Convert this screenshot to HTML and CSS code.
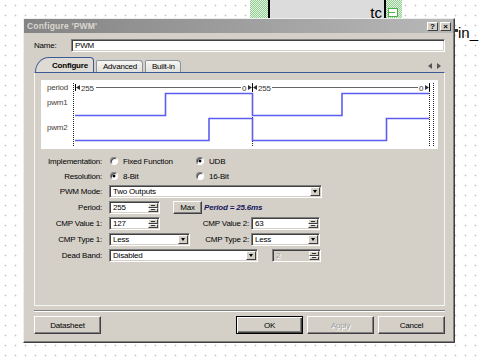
FILE: index.html
```html
<!DOCTYPE html>
<html lang="en">
	<head>
		<meta charset="UTF-8">
		<title>Configure 'PWM'</title>
		<link rel="stylesheet" href="styles.css">
	</head>
	<body>
		<!-- schematic canvas behind the dialog -->
		<div class="comp">
			<div class="hatch"></div>
			<div class="comp-body"><span class="comp-label">tc</span></div>
			<div class="hatch hatch-right"><span class="pin"></span></div>
		</div>
		<div class="net-label"><span class="net-tick"></span>in_</div>

		<div class="dialog">
			<div class="titlebar">
				<span class="title">Configure 'PWM'</span>
				<span class="tb-btns"><span class="tb-btn">?</span><span class="tb-btn">&times;</span></span>
			</div>
			<div class="dlg-body">
				<div class="name-row">
					<span class="name-lbl">Name:</span>
					<div class="field name-field">PWM</div>
				</div>

				<div class="tabs">
					<span class="tab active">Configure</span>
					<span class="tab">Advanced</span>
					<span class="tab">Built-in</span>
					<span class="tab-arrows"><i class="arr-left"></i><i class="arr-right"></i></span>
				</div>

				<div class="panel">
					<svg class="chart" width="397" height="69" viewBox="0 0 397 69">
						<g class="chart-lbl">
							<text x="6" y="10">period</text>
							<text x="6" y="25">pwm1</text>
							<text x="6" y="50">pwm2</text>
						</g>
						<g class="guides">
							<line x1="32.5" y1="3" x2="32.5" y2="66"/>
							<line x1="211.5" y1="3" x2="211.5" y2="66"/>
							<line x1="388.5" y1="3" x2="388.5" y2="66"/>
							<line x1="392.5" y1="3" x2="392.5" y2="66"/>
						</g>
						<g class="period">
							<line x1="55" y1="7.5" x2="200" y2="7.5"/>
							<line x1="231" y1="7.5" x2="377" y2="7.5"/>
							<line class="tick" x1="34.5" y1="4" x2="34.5" y2="11"/>
							<line class="tick" x1="211.5" y1="4" x2="211.5" y2="11"/>
							<line class="tick" x1="388.5" y1="4" x2="388.5" y2="11"/>
							<polygon points="35,7.5 39,5 39,10"/>
							<polygon points="207,5 207,10 211,7.5"/>
							<polygon points="212,7.5 216,5 216,10"/>
							<polygon points="384,5 384,10 388,7.5"/>
							<text x="40" y="10.5">255</text>
							<text x="201" y="10.5">0</text>
							<text x="217" y="10.5">255</text>
							<text x="378" y="10.5">0</text>
						</g>
						<polyline class="wave" points="34,35.5 124.5,35.5 124.5,13.5 211.5,13.5 211.5,35.5 301,35.5 301,13.5 388,13.5"/>
						<polyline class="wave" points="34,60.5 168,60.5 168,38.5 211.5,38.5 211.5,60.5 345.5,60.5 345.5,38.5 388,38.5"/>
					</svg>

					<div class="form">
						<div class="row row-radio">
							<span class="lbl">Implementation:</span>
							<span class="radio"><span class="dot"></span>Fixed Function</span>
							<span class="radio"><span class="dot on"></span>UDB</span>
						</div>
						<div class="row row-radio">
							<span class="lbl">Resolution:</span>
							<span class="radio"><span class="dot on"></span>8-Bit</span>
							<span class="radio"><span class="dot"></span>16-Bit</span>
						</div>
						<div class="row">
							<span class="lbl">PWM Mode:</span>
							<div class="field select w-mode"><span class="val">Two Outputs</span><span class="drop"></span></div>
						</div>
						<div class="row">
							<span class="lbl">Period:</span>
							<div class="field spin w-spin"><span class="val">255</span><span class="arrows"><i></i><i></i></span></div>
							<button class="btn btn-max">Max</button>
							<span class="period-note">Period = 25.6ms</span>
						</div>
						<div class="row">
							<span class="lbl">CMP Value 1:</span>
							<div class="field spin w-spin"><span class="val">127</span><span class="arrows"><i></i><i></i></span></div>
							<span class="lbl2 lbl2-wide">CMP Value 2:</span>
							<div class="field spin w-small"><span class="val">63</span><span class="arrows"><i></i><i></i></span></div>
						</div>
						<div class="row">
							<span class="lbl">CMP Type 1:</span>
							<div class="field select w-type"><span class="val">Less</span><span class="drop"></span></div>
							<span class="lbl2">CMP Type 2:</span>
							<div class="field select w-small"><span class="val">Less</span><span class="drop"></span></div>
						</div>
						<div class="row row-dead">
							<span class="lbl">Dead Band:</span>
							<div class="field select w-dead"><span class="val">Disabled</span><span class="drop"></span></div>
							<div class="field spin disabled w-dis"><span class="val">2</span><span class="arrows"><i></i><i></i></span></div>
						</div>
					</div>
				</div>

				<div class="sep"></div>

				<div class="btn-row">
					<button class="btn">Datasheet</button>
					<button class="btn default">OK</button>
					<button class="btn disabled">Apply</button>
					<button class="btn">Cancel</button>
				</div>
			</div>
		</div>
	</body>
</html>
```

FILE: styles.css
```css
body {
	margin: 0;
	width: 480px;
	height: 362px;
	overflow: hidden;
	position: relative;
	font-family: "Liberation Sans", Arial, sans-serif;
	font-size: 8px;
	letter-spacing: -0.2px;
	color: #000;
	background-color: #fff;
	background-image: radial-gradient(circle at 5.5px 5.5px, #c4c4c4 0.8px, transparent 1.1px);
	background-size: 10px 10px;
}

/* schematic canvas */

.comp {
	position: absolute;
	left: 250px;
	top: 0;
	height: 18px;
	display: flex;
}

.hatch {
	width: 18px;
	background: repeating-conic-gradient(#8fce8f 0 25%, #e4f4e4 0 50%) 0 0 / 2px 2px;
}

.hatch-right {
	width: 16px;
	position: relative;
}

.comp-body {
	width: 114px;
	background-color: #dcdcdc;
	border-left: 2px solid #000;
	border-right: 2px solid #000;
	position: relative;
}

.comp-label {
	position: absolute;
	right: 2px;
	bottom: -3px;
	font-size: 15px;
	letter-spacing: 0;
}

.pin {
	position: absolute;
	left: 2px;
	top: 8px;
	width: 10px;
	height: 9px;
	border: 1px solid #4fae4f;
	box-sizing: border-box;
	background: #fff linear-gradient(#4fae4f, #4fae4f) 0 3px / 6px 1px no-repeat;
}

.net-label {
	position: absolute;
	left: 455px;
	top: 24px;
	font-size: 15px;
	letter-spacing: 0;
	display: flex;
	align-items: flex-start;
}

.net-tick {
	width: 3px;
	height: 3px;
	margin-top: 5px;
	background-color: #333;
}

/* dialog window */

.dialog {
	position: absolute;
	left: 23px;
	top: 18px;
	width: 432px;
	height: 325px;
	box-sizing: border-box;
	background-color: #d4d0c8;
	border: 1px solid;
	border-color: #eeeeee #404040 #404040 #eeeeee;
	box-shadow: inset -1px -1px #808080;
	display: flex;
	flex-direction: column;
}

.titlebar {
	height: 14px;
	margin-right: 1px;
	background: linear-gradient(to right, #848484, #b8b8b8);
	display: flex;
	align-items: center;
	padding-left: 3px;
}

.title {
	font-weight: bold;
	font-size: 8.5px;
	letter-spacing: 0.2px;
	color: #dcd8d0;
}

.tb-btns {
	margin-left: auto;
	margin-right: 2px;
	display: flex;
	gap: 2px;
}

.tb-btn {
	width: 11px;
	height: 9px;
	box-sizing: border-box;
	background-color: #d4d0c8;
	border: 1px solid;
	border-color: #fff #404040 #404040 #fff;
	font-weight: bold;
	font-size: 8px;
	line-height: 7px;
	text-align: center;
	letter-spacing: 0;
}

.dlg-body {
	padding: 6px 9px 0 10px;
}

.name-row {
	display: flex;
	align-items: center;
	height: 13px;
}

.name-lbl {
	width: 37px;
}

.field {
	height: 13px;
	box-sizing: border-box;
	background-color: #fff;
	border: 1px solid;
	border-color: #808080 #fff #fff #808080;
	padding: 1px;
	box-shadow: inset 1px 1px #404040, inset -1px -1px #d4d0c8;
	line-height: 9px;
	display: flex;
}

.name-field {
	flex: 1;
	padding-left: 3px;
}

/* tabs */

.tabs {
	margin-top: 5px;
	height: 15px;
	display: flex;
	align-items: flex-end;
	padding-left: 1px;
}

.tab {
	height: 12px;
	box-sizing: border-box;
	border: 1px solid #8c949a;
	border-bottom: none;
	border-radius: 2px 4px 0 0;
	padding: 0 5px 0 6px;
	margin-right: 2px;
	line-height: 11px;
	background: linear-gradient(#f6f6f4, #e2e0da);
}

.tab.active {
	height: 15px;
	font-weight: bold;
	line-height: 15px;
	border-color: #3c5a96;
	border-top-left-radius: 14px 15px;
	padding: 0 5px 0 16px;
	background: #dedbd4;
}

.tab-arrows {
	margin-left: auto;
	margin-right: 4px;
	margin-bottom: 3px;
	display: flex;
	gap: 5px;
}

.tab-arrows i {
	width: 0;
	height: 0;
	border-top: 3px solid transparent;
	border-bottom: 3px solid transparent;
}

.arr-left {
	border-right: 4px solid #555;
}

.arr-right {
	border-left: 4px solid #555;
}

.panel {
	height: 234px;
	box-sizing: border-box;
	border: 1px solid #f6f6f4;
	border-top-color: #3c5a96;
	padding: 7px 6px 0;
}

/* waveform chart */

.chart {
	display: block;
	background-color: #fff;
}

.chart text {
	font-family: "Liberation Sans", Arial, sans-serif;
	font-size: 8px;
}

.chart-lbl text {
	fill: #4b4036;
}

.guides line {
	stroke: #222;
	stroke-dasharray: 1 1;
}

.period line {
	stroke: #666;
}

.period .tick {
	stroke: #000;
}

.period polygon,
.period text {
	fill: #333;
}

.wave {
	fill: none;
	stroke: #5d5df2;
	stroke-width: 1.6;
}

/* form rows */

.form {
	margin-top: 6px;
}

.row {
	display: flex;
	align-items: center;
	height: 13px;
	margin-bottom: 3px;
	white-space: nowrap;
}

.row-radio {
	height: 12px;
}

.row-dead {
	margin-top: 3px;
}

.lbl {
	flex: 0 0 61px;
	text-align: right;
	margin-right: 7px;
}

.lbl2 {
	flex: 0 0 59px;
	text-align: right;
	margin-right: 2px;
}

.lbl2-wide {
	flex-basis: 89px;
}

.radio {
	width: 86px;
	display: flex;
	align-items: center;
}

.dot {
	width: 6px;
	height: 6px;
	margin: 0 5px 0 1px;
	border-radius: 50%;
	border: 1px solid;
	border-color: #808080 #fff #fff #808080;
	background-color: #fff;
	box-shadow: inset 1px 1px #404040;
}

.dot.on {
	background: radial-gradient(circle, #000 1.3px, #fff 1.7px);
}

.val {
	flex: 1;
	padding-left: 2px;
	overflow: hidden;
}

.drop,
.arrows i {
	background-color: #d4d0c8;
	border: 1px solid;
	border-color: #fff #404040 #404040 #fff;
	box-sizing: border-box;
}

.drop {
	width: 10px;
	display: flex;
	align-items: center;
	justify-content: center;
}

.drop::after {
	content: "";
	border-left: 2.5px solid transparent;
	border-right: 2.5px solid transparent;
	border-top: 3px solid #000;
}

.arrows {
	width: 10px;
	display: flex;
	flex-direction: column;
}

.arrows i {
	flex: 1;
	background-image: linear-gradient(#333, #333);
	background-size: 4px 1px;
	background-position: center;
	background-repeat: no-repeat;
}

.w-mode {
	width: 213px;
}

.w-spin {
	width: 51px;
}

.w-small {
	width: 69px;
}

.w-type {
	width: 81px;
}

.w-dead {
	width: 149px;
}

.w-dis {
	width: 49px;
	margin-left: 14px;
}

.field.disabled {
	background-color: #d4d0c8;
	color: #a0a0a0;
	text-shadow: 1px 1px #fff;
}

.period-note {
	margin-left: 2px;
	font-weight: bold;
	font-style: italic;
	color: #16165c;
}

/* push buttons */

.btn {
	font-family: inherit;
	font-size: 8px;
	letter-spacing: -0.2px;
	color: #000;
	margin: 0;
	padding: 0;
	width: 67px;
	height: 18px;
	box-sizing: border-box;
	background-color: #d4d0c8;
	border: 1px solid;
	border-color: #fff #404040 #404040 #fff;
	box-shadow: inset -1px -1px #808080;
}

.btn-max {
	width: 29px;
	height: 13px;
	margin-left: 13px;
	line-height: 10px;
}

.btn.default {
	border-color: #000;
	box-shadow: inset 1px 1px #fff, inset -1px -1px #404040, inset -2px -2px #808080;
}

.btn.disabled {
	color: #a0a0a0;
	text-shadow: 1px 1px #fff;
}

.sep {
	margin-top: 4px;
	border-top: 1px solid #808080;
	border-bottom: 1px solid #fff;
}

.btn-row {
	margin-top: 4px;
	display: flex;
	gap: 4px;
}

.btn-row .default {
	margin-left: auto;
}
```
